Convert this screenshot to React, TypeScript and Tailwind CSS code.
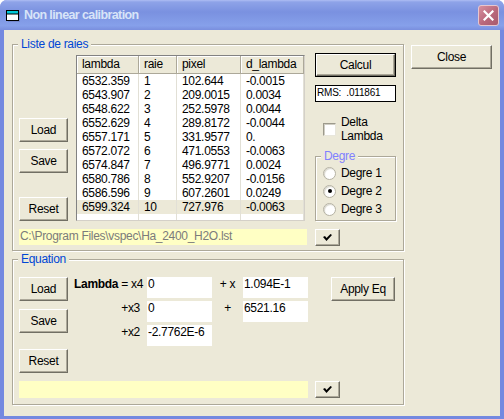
import React from "react";

function Btn({
  children,
  className = "",
  def = false,
}: {
  children?: React.ReactNode;
  className?: string;
  def?: boolean;
}) {
  return (
    <div
      className={`shrink-0 flex bg-[#ece9d8] text-black ${def ? "border border-black" : ""} ${className}`}
    >
      <div className="flex-1 flex items-center justify-center border-t border-l border-t-white border-l-white border-r border-b border-r-[#716f64] border-b-[#716f64] shadow-[inset_-1px_-1px_0_#aca899]">
        {children}
      </div>
    </div>
  );
}

function Check() {
  return (
    <svg width="9" height="7" viewBox="0 0 9 7">
      <path d="M0 3 L2 2 L3.5 4 L7.5 0 L9 1 L3.5 7 Z" fill="#000" />
    </svg>
  );
}

function Frame({
  label,
  labelColor,
  className = "",
  children,
}: {
  label: string;
  labelColor: string;
  className?: string;
  children?: React.ReactNode;
}) {
  return (
    <div
      className={`relative border border-[#aca899] shadow-[1px_1px_0_0_#fff,inset_1px_1px_0_0_#fff] ${className}`}
    >
      <span
        className={`absolute -top-[8px] left-[5px] px-[3px] bg-[#ece9d8] leading-[14px] ${labelColor}`}
      >
        {label}
      </span>
      {children}
    </div>
  );
}

const rows = [
  ["6532.359", "1", "102.644", "-0.0015"],
  ["6543.907", "2", "209.0015", "0.0034"],
  ["6548.622", "3", "252.5978", "0.0044"],
  ["6552.629", "4", "289.8172", "-0.0044"],
  ["6557.171", "5", "331.9577", "0."],
  ["6572.072", "6", "471.0553", "-0.0063"],
  ["6574.847", "7", "496.9771", "0.0024"],
  ["6580.786", "8", "552.9207", "-0.0156"],
  ["6586.596", "9", "607.2601", "0.0249"],
  ["6599.324", "10", "727.976", "-0.0063"],
];
const widths = ["w-[62px]", "w-[38px]", "w-[64px]", "w-[63px]"];
const heads = ["lambda", "raie", "pixel", "d_lambda"];

function Table() {
  return (
    <div className="mt-[2px] w-[229px] h-[166px] flex flex-col bg-white border border-t-[#828282] border-l-[#828282] border-r-[#d4d0c8] border-b-[#d4d0c8]">
      <div className="flex h-[18px] shrink-0">
        {heads.map((h, i) => (
          <div
            key={h}
            className={`${widths[i]} h-full bg-[#ece9d8] border-r border-b border-r-[#aca899] border-b-[#aca899] shadow-[inset_1px_1px_0_#fff] pl-[5px] leading-[17px]`}
          >
            {h}
          </div>
        ))}
      </div>
      {rows.map((r, ri) => (
        <div key={ri} className={`flex h-[14px] ${ri === 9 ? "bg-[#ece9d8]" : ""}`}>
          {r.map((c, i) => (
            <div
              key={i}
              className={`${widths[i]} h-full border-r border-r-[#e2e0d6] pl-[5px] leading-[14px] whitespace-nowrap`}
            >
              {c}
            </div>
          ))}
        </div>
      ))}
      <div className="flex flex-1">
        {widths.map((w, i) => (
          <div key={i} className={`${w} h-full border-r border-r-[#e2e0d6]`} />
        ))}
      </div>
    </div>
  );
}

function Radio({ label, on = false }: { label: string; on?: boolean }) {
  return (
    <div className="h-[18px] flex items-center gap-[5px]">
      <div className="w-[13px] h-[13px] rounded-full bg-white border border-[#b5b2a3] shadow-[inset_1px_1px_1px_#d8d6cc] flex items-center justify-center">
        {on && <div className="w-[4px] h-[4px] rounded-full bg-black" />}
      </div>
      <span className="leading-[14px]">{label}</span>
    </div>
  );
}

export default function App() {
  return (
    <div className="w-[504px] h-[419px] flex flex-col bg-[#7489e0] rounded-t-[7px] overflow-hidden font-['Liberation_Sans',Arial,sans-serif] text-[12px] tracking-[-0.3px] text-black">
      {/* title bar */}
      <div className="h-[30px] shrink-0 flex items-center bg-[linear-gradient(to_bottom,#aebdf3_0px,#8ea3e8_2px,#7a91e0_40%,#86a0ea_85%,#7a8fde_100%)]">
        <div className="ml-[5px] w-[16px] h-[14px] mt-[2px]">
          <svg width="16" height="14" viewBox="0 0 16 14">
            <rect x="3" y="3" width="12" height="10" fill="#6b7bbf" opacity="0.6" />
            <rect x="1.5" y="1.5" width="12" height="10" fill="#fff" stroke="#000" strokeWidth="1" />
            <rect x="2" y="2" width="11" height="3" fill="#00c8d8" />
            <line x1="1.5" y1="5" x2="13.5" y2="5" stroke="#000" strokeWidth="1" />
          </svg>
        </div>
        <span className="ml-[3px] font-bold text-[12.5px] tracking-[-0.6px] text-[#d8e4f8]">
          Non linear calibration
        </span>
        <div className="ml-auto mr-[5px] w-[21px] h-[21px] rounded-[3px] border border-[#e6c6cf] bg-[linear-gradient(135deg,#d7909f,#b9687b_55%,#a85a6d)] flex items-center justify-center">
          <svg width="11" height="11" viewBox="0 0 11 11">
            <path d="M1.5 1.5 L9.5 9.5 M9.5 1.5 L1.5 9.5" stroke="#fff" strokeWidth="2.2" strokeLinecap="square" />
          </svg>
        </div>
      </div>

      {/* client */}
      <div className="flex-1 mx-[4px] mb-[3px] bg-[#ece9d8] flex pl-[8px] pt-[14px]">
        <div className="w-[392px] flex flex-col">
          <Frame label="Liste de raies" labelColor="text-[#0046d5]" className="h-[207px] pt-[8px] pl-[6px]">
            <div className="flex items-start">
              <div className="w-[49px] flex flex-col">
                <Btn className="mt-[65px] w-[49px] h-[24px]">Load</Btn>
                <Btn className="mt-[7px] w-[49px] h-[24px]">Save</Btn>
                <Btn className="mt-[24px] w-[49px] h-[24px]">Reset</Btn>
              </div>
              <div className="ml-[8px]">
                <Table />
              </div>
              <div className="ml-[10px] w-[81px] flex flex-col">
                <Btn def className="w-[81px] h-[24px]">Calcul</Btn>
                <div className="mt-[8px] h-[17px] bg-white border border-black text-[10px] tracking-[-0.2px] leading-[14px] pl-[1px] whitespace-pre">
                  {"RMS:  .011861"}
                </div>
                <div className="mt-[13px] h-[28px] pl-[8px] flex items-center gap-[5px]">
                  <div className="w-[13px] h-[13px] bg-white border border-t-[#9d9a8c] border-l-[#9d9a8c] border-r-[#e8e6dc] border-b-[#e8e6dc] shadow-[inset_1px_1px_0_#d0cec4]" />
                  <div className="leading-[14px]">
                    Delta
                    <br />
                    Lambda
                  </div>
                </div>
                <Frame label="Degre" labelColor="text-[#8080ff]" className="mt-[13px] h-[65px] pt-[7px] pl-[7px]">
                  <Radio label="Degre 1" />
                  <Radio label="Degre 2" on />
                  <Radio label="Degre 3" />
                </Frame>
              </div>
            </div>
            <div className="mt-[8px] flex items-start">
              <div className="w-[288px] h-[16px] bg-[#ffffc4] text-[#7b7b7b] leading-[15px] pl-[1px] whitespace-nowrap">
                C:\Program Files\vspec\Ha_2400_H2O.lst
              </div>
              <Btn className="ml-[8px] w-[25px] h-[17px]">
                <Check />
              </Btn>
            </div>
          </Frame>

          <Frame label="Equation" labelColor="text-[#0046d5]" className="mt-[8px] h-[146px] pt-[17px] pl-[6px]">
            <div className="flex items-start">
              <div className="w-[49px] flex flex-col">
                <Btn className="w-[49px] h-[24px]">Load</Btn>
                <Btn className="mt-[8px] w-[49px] h-[24px]">Save</Btn>
                <Btn className="mt-[16px] w-[49px] h-[24px]">Reset</Btn>
              </div>
              <div className="ml-[6px] flex flex-col gap-[3px]">
                <div className="flex h-[21px]">
                  <div className="w-[73px] pr-[7px] text-right leading-[14px] whitespace-nowrap">
                    <b>Lambda</b> = x4
                  </div>
                  <div className="w-[65px] bg-white pl-[1px] leading-[14px]">0</div>
                  <div className="w-[31px] text-center leading-[14px]">+ x</div>
                  <div className="w-[65px] bg-white pl-[1px] leading-[14px]">1.094E-1</div>
                </div>
                <div className="flex h-[21px]">
                  <div className="w-[73px] pr-[7px] text-right leading-[14px]">+x3</div>
                  <div className="w-[65px] bg-white pl-[1px] leading-[14px]">0</div>
                  <div className="w-[31px] text-center leading-[14px]">+</div>
                  <div className="w-[65px] bg-white pl-[1px] leading-[14px]">6521.16</div>
                </div>
                <div className="flex h-[21px]">
                  <div className="w-[73px] pr-[7px] text-right leading-[14px]">+x2</div>
                  <div className="w-[65px] bg-white pl-[1px] leading-[14px] whitespace-nowrap">-2.7762E-6</div>
                </div>
              </div>
              <Btn className="ml-[23px] w-[64px] h-[24px]">Apply Eq</Btn>
            </div>
            <div className="mt-[8px] flex items-start">
              <div className="w-[289px] h-[17px] bg-[#ffffc4]" />
              <Btn className="ml-[7px] w-[25px] h-[17px]">
                <Check />
              </Btn>
            </div>
          </Frame>
        </div>
        <Btn className="ml-[7px] mt-[1px] w-[81px] h-[24px]">Close</Btn>
      </div>
    </div>
  );
}
